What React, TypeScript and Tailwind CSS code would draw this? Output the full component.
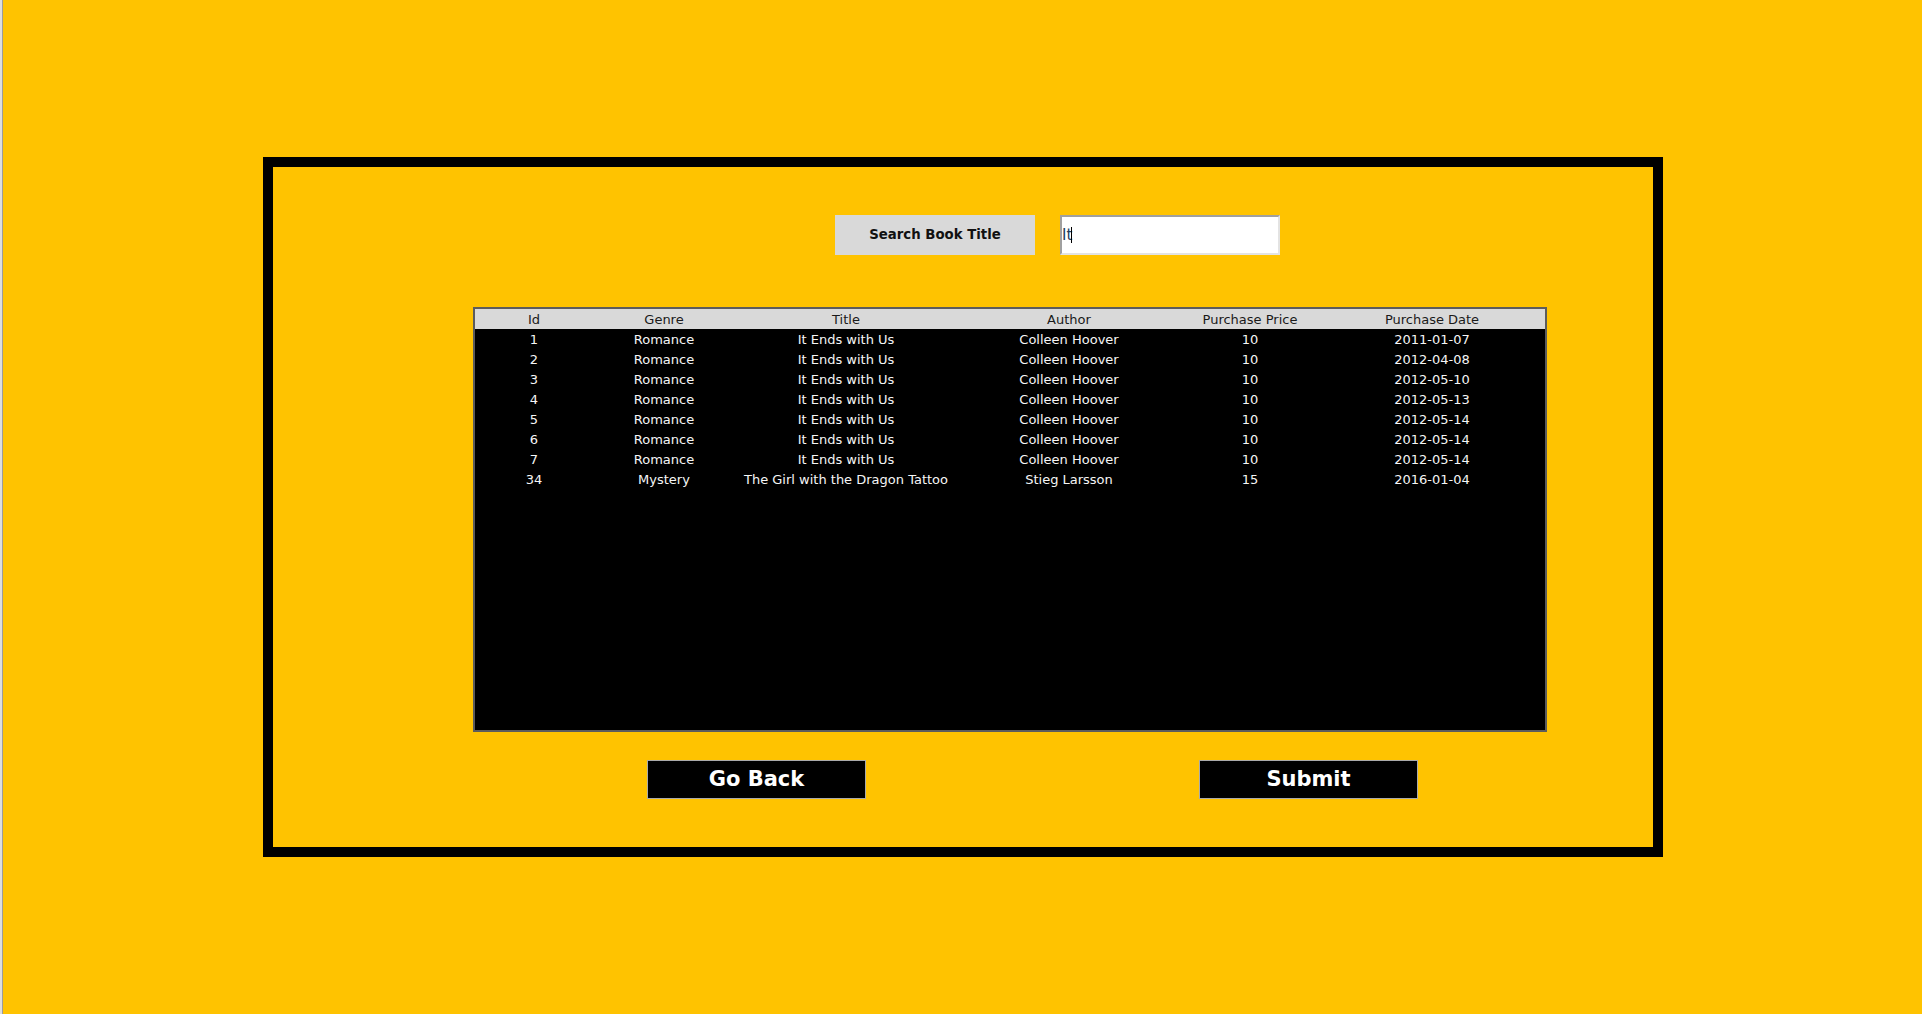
import React, { useState } from 'react';

const rows = [
  { id: 1, genre: 'Romance', title: 'It Ends with Us', author: 'Colleen Hoover', price: 10, date: '2011-01-07' },
  { id: 2, genre: 'Romance', title: 'It Ends with Us', author: 'Colleen Hoover', price: 10, date: '2012-04-08' },
  { id: 3, genre: 'Romance', title: 'It Ends with Us', author: 'Colleen Hoover', price: 10, date: '2012-05-10' },
  { id: 4, genre: 'Romance', title: 'It Ends with Us', author: 'Colleen Hoover', price: 10, date: '2012-05-13' },
  { id: 5, genre: 'Romance', title: 'It Ends with Us', author: 'Colleen Hoover', price: 10, date: '2012-05-14' },
  { id: 6, genre: 'Romance', title: 'It Ends with Us', author: 'Colleen Hoover', price: 10, date: '2012-05-14' },
  { id: 7, genre: 'Romance', title: 'It Ends with Us', author: 'Colleen Hoover', price: 10, date: '2012-05-14' },
  { id: 34, genre: 'Mystery', title: 'The Girl with the Dragon Tattoo', author: 'Stieg Larsson', price: 15, date: '2016-01-04' },
];

const headers = ['Id', 'Genre', 'Title', 'Author', 'Purchase Price', 'Purchase Date'];

// column widths picked from the screenshot
const grid = 'grid grid-cols-[118px_142px_222px_224px_138px_226px]';

export default function App() {
  const [query, setQuery] = useState('It');

  return (
    <div className="min-h-[1014px] w-full bg-[#ffc300] border-l-2 border-[#dedede] font-['DejaVu_Sans',sans-serif]">
      <div className="min-h-[1014px] border-l border-[#9c9c9c] pt-[157px] pl-[260px]">
        <div className="w-[1400px] h-[700px] border-[10px] border-black">
          <div className="flex items-center pt-[48px] pl-[562px] gap-[25px]">
            <button className="w-[200px] h-[40px] bg-[#d9d9d9] text-[13.3px] font-bold text-[#111]">
              Search Book Title
            </button>
            <div className="relative">
              <input
                value={query}
                onChange={e => setQuery(e.target.value)}
                className="w-[220px] h-[40px] bg-white border-2 border-t-[#a0a0a0] border-l-[#a0a0a0] border-r-[#e3e3e3] border-b-[#e3e3e3] px-0 text-[15px] text-[#1d3b5c] outline-none caret-transparent"
              />
              <span className="absolute left-[11px] top-[12px] w-px h-[16px] bg-black" />
            </div>
          </div>

          <div className="mt-[52px] ml-[200px] w-[1074px] h-[425px] border-2 border-[#5c5c5c] bg-black text-[13px]">
            <div className={`${grid} h-[20px] bg-[#d9d9d9] text-[#1a1a1a] items-center`}>
              {headers.map(h => <div key={h} className="text-center leading-none">{h}</div>)}
            </div>
            {rows.map(r => (
              <div key={r.id} className={`${grid} h-[20px] text-[#f6f6f6] items-center`}>
                <div className="text-center leading-none">{r.id}</div>
                <div className="text-center leading-none">{r.genre}</div>
                <div className="text-center leading-none">{r.title}</div>
                <div className="text-center leading-none">{r.author}</div>
                <div className="text-center leading-none">{r.price}</div>
                <div className="text-center leading-none">{r.date}</div>
              </div>
            ))}
          </div>

          <div className="flex mt-[28px] pl-[374px] gap-[333px]">
            <button className="w-[219px] h-[39px] bg-black border border-[#aaa] text-white font-bold text-[21px]">Go Back</button>
            <button className="w-[219px] h-[39px] bg-black border border-[#aaa] text-white font-bold text-[21px]">Submit</button>
          </div>
        </div>
      </div>
    </div>
  );
}
